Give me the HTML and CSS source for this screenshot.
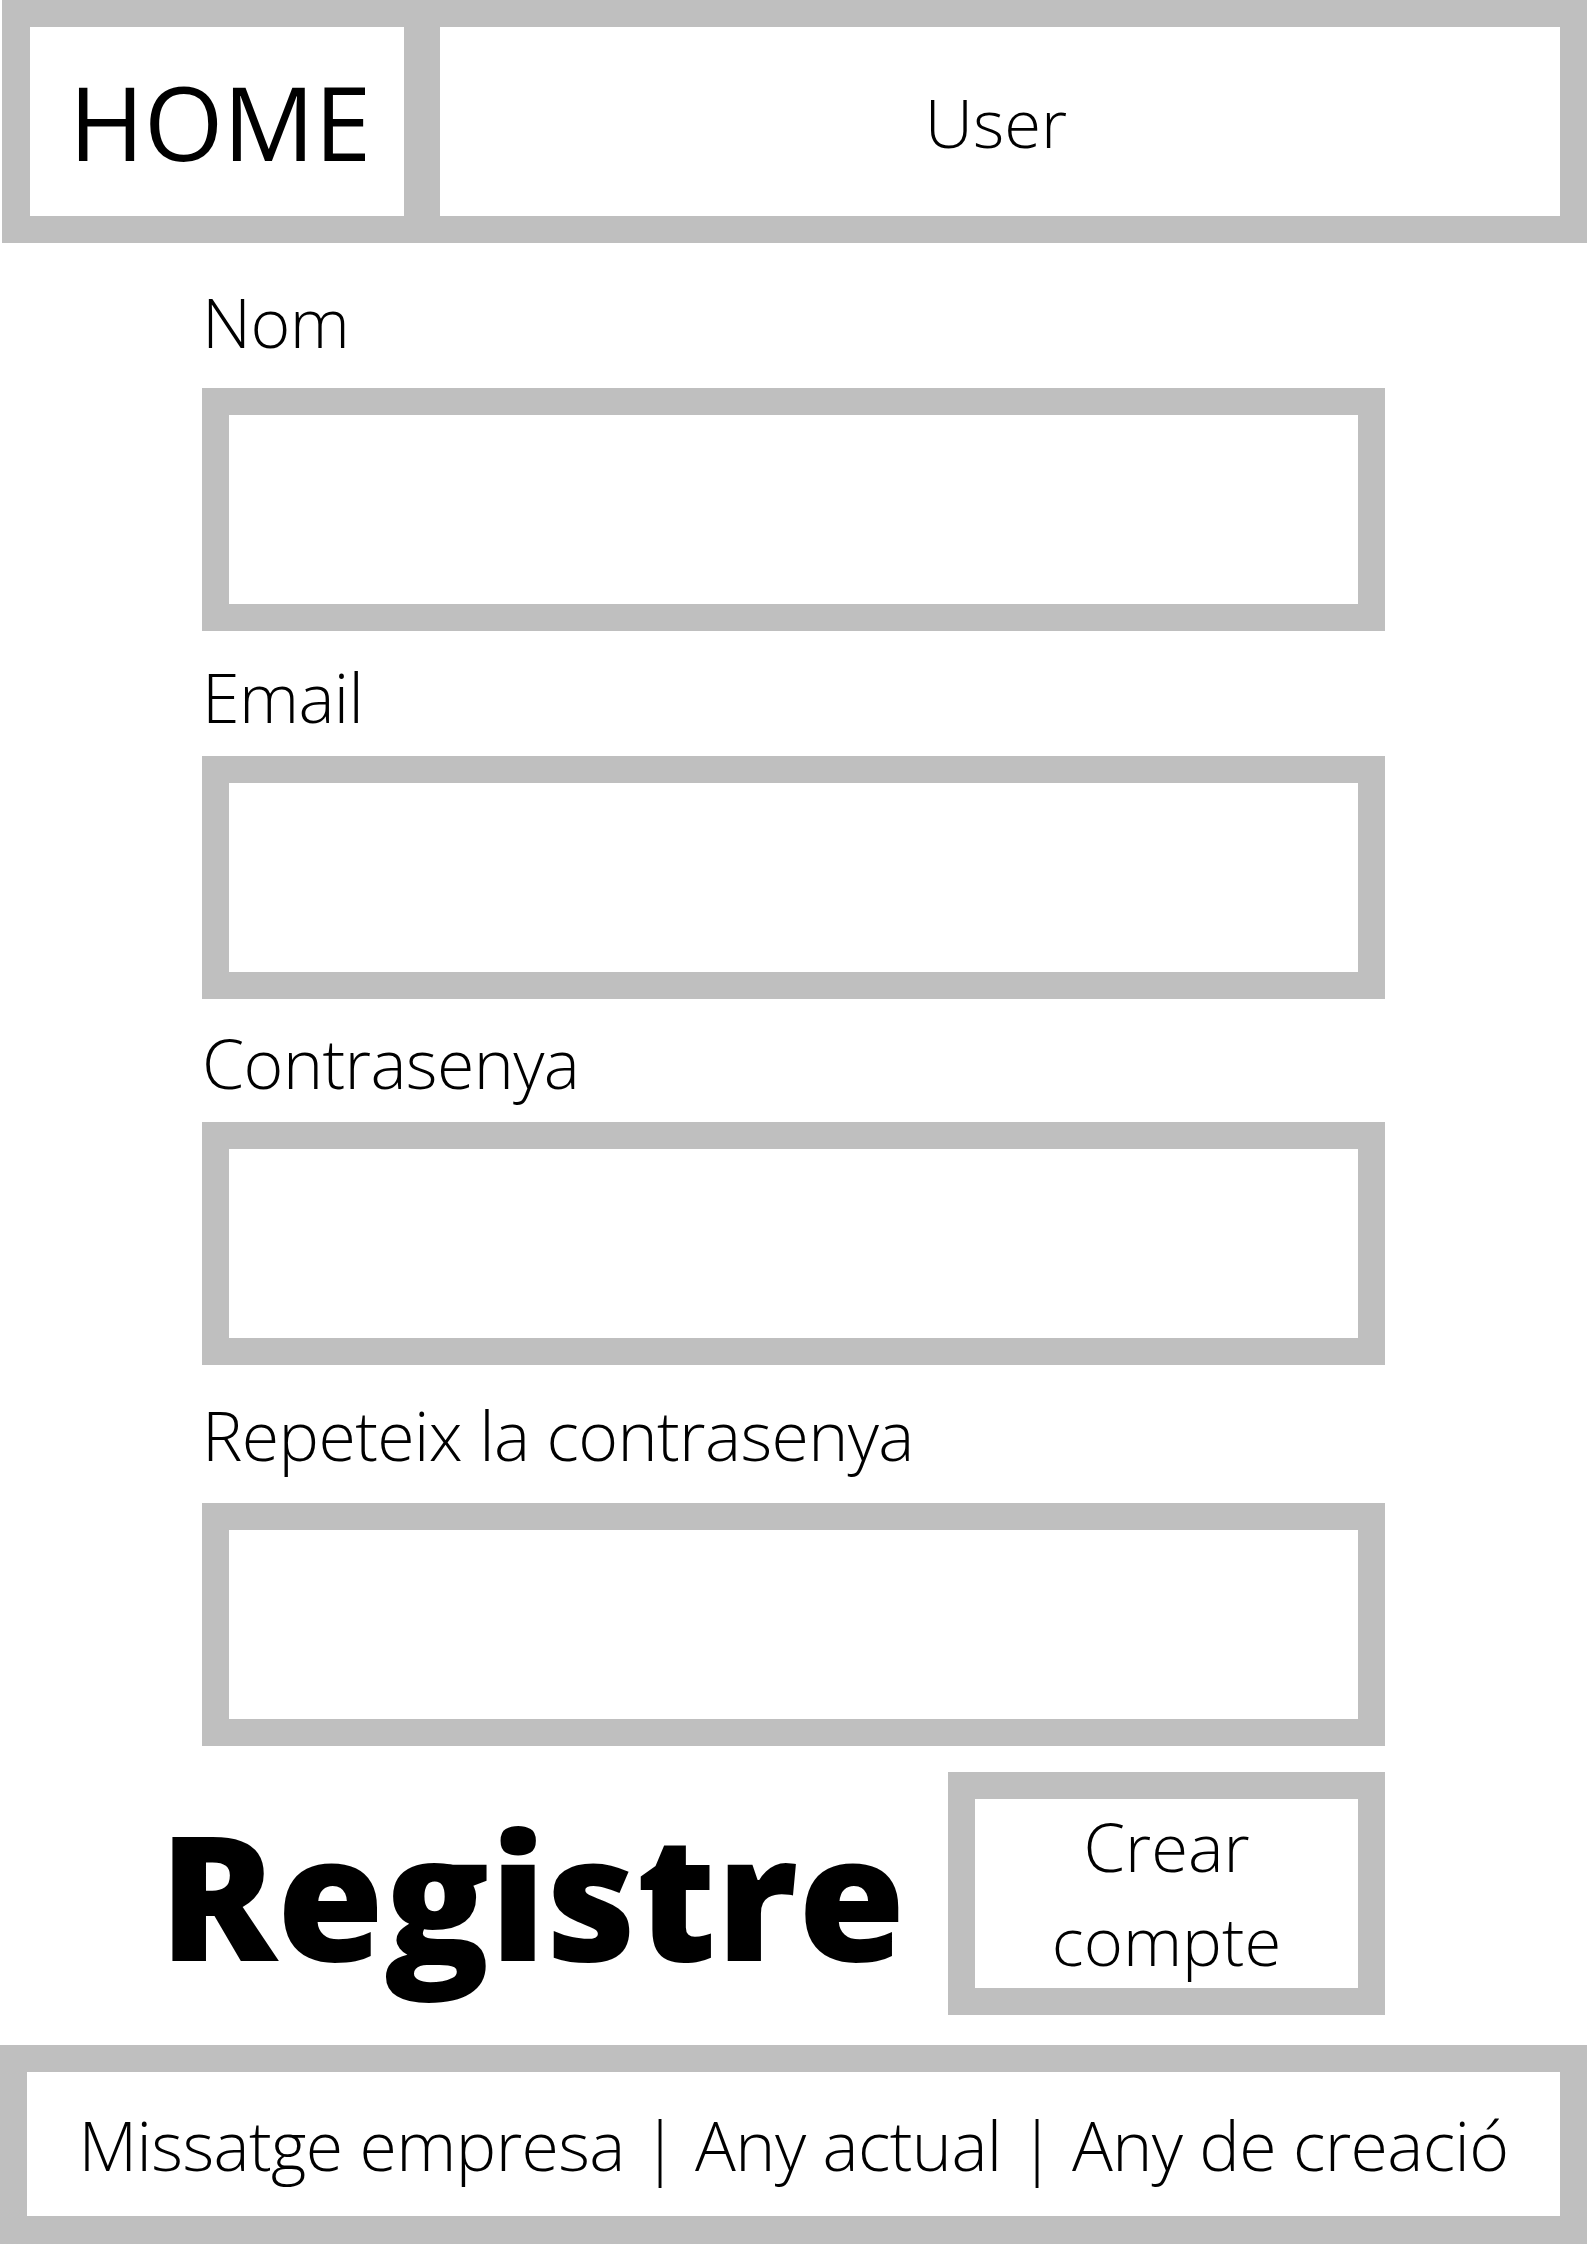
FILE: index.html
```html
<!DOCTYPE html>
<html lang="ca">
<head>
<meta charset="utf-8">
<title>Registre</title>
<link rel="stylesheet" href="styles.css">
</head>
<body>
<header class="topbar">
  <div class="cell cell-home">HOME</div>
  <div class="cell cell-user">User</div>
</header>
<main class="form">
  <div class="field field-nom">
    <div class="label">Nom</div>
    <div class="input"></div>
  </div>
  <div class="field field-email">
    <div class="label">Email</div>
    <div class="input"></div>
  </div>
  <div class="field field-pass">
    <div class="label">Contrasenya</div>
    <div class="input"></div>
  </div>
  <div class="field field-repeat">
    <div class="label">Repeteix la contrasenya</div>
    <div class="input"></div>
  </div>
</main>
<section class="submit-row">
  <h1 class="title">Registre</h1>
  <div class="button">Crear<br>compte</div>
</section>
<footer class="footer">
  <div class="footer-inner">Missatge empresa | Any actual | Any de creació</div>
</footer>
</body>
</html>
```
FILE: styles.css
```css
* { box-sizing: border-box; }
html, body { margin: 0; padding: 0; background: #ffffff; }
body {
  font-family: "Open Sans", "Noto Sans", sans-serif;
  color: #000;
  width: 1587px;
  height: 2245px;
  overflow: hidden;
}

.topbar {
  margin-left: 2px;
  height: 243px;
  background: #bfbfbf;
  padding: 27px 27px 27px 28px;
  display: flex;
  gap: 36px;
}
.cell {
  background: #fff;
  display: flex;
  align-items: center;
  justify-content: center;
}
.cell-home {
  width: 374px;
  padding-left: 6px;
  font-size: 102px;
  font-weight: 400;
  letter-spacing: -0.3px;
}
.cell-user {
  flex: 1;
  padding-right: 8px;
  font-size: 67px;
  font-weight: 300;
}

.form {
  margin-left: 202px;
  width: 1183px;
  display: flex;
  flex-direction: column;
}
.label {
  font-size: 68px;
  font-weight: 300;
  line-height: normal;
  letter-spacing: -0.6px;
}
.input {
  height: 243px;
  border: 27px solid #bfbfbf;
  background: #fff;
}
.field-nom { margin-top: 32px; }
.field-nom .label { margin-bottom: 20px; }
.field-email { margin-top: 19px; }
.field-email .label { margin-bottom: 13px; }
.field-pass { margin-top: 17px; }
.field-pass .label { margin-bottom: 13px; }
.field-repeat { margin-top: 23px; }
.field-repeat .label { margin-bottom: 22px; }

.submit-row {
  margin: 26px 0 0 159px;
  width: 1226px;
  display: flex;
  justify-content: space-between;
  align-items: center;
}
.title {
  margin: 0;
  font-size: 174px;
  font-weight: 800;
  line-height: 1;
}
.button {
  width: 437px;
  height: 243px;
  border: 27px solid #bfbfbf;
  background: #fff;
  font-size: 67px;
  font-weight: 300;
  line-height: 94px;
  text-align: center;
}

.footer {
  margin-top: 30px;
  background: #bfbfbf;
  padding: 27px 27px 28px 27px;
}
.footer-inner {
  background: #fff;
  height: 144px;
  display: flex;
  align-items: center;
  justify-content: center;
  font-size: 68px;
  font-weight: 300;
  letter-spacing: -0.6px;
}
```
